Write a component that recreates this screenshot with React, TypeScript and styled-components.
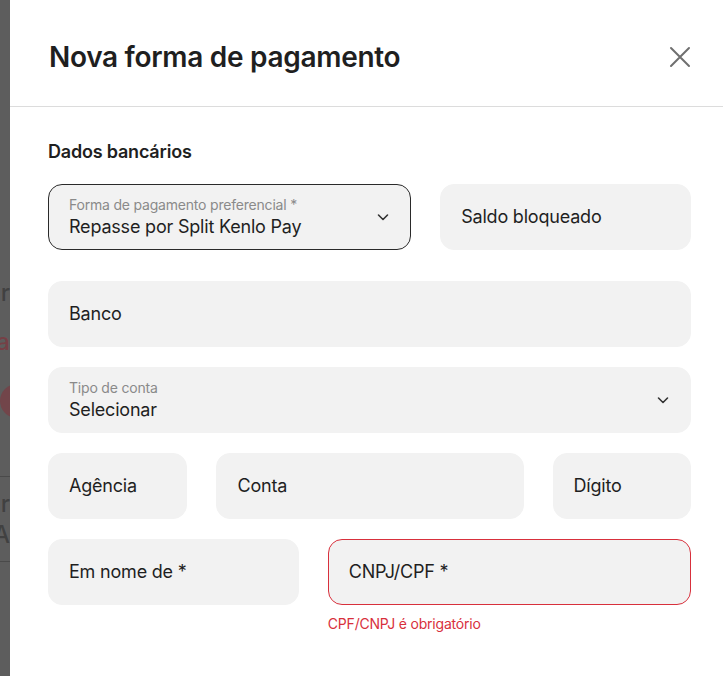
import styled, { createGlobalStyle } from 'styled-components';

const GlobalStyle = createGlobalStyle`
  html, body {
    margin: 0;
    padding: 0;
    background: #5d5d5d;
  }
  body {
    font-family: Inter, "Noto Sans", "Liberation Sans", sans-serif;
    color: #1f1f1f;
  }
`;

const Page = styled.div`
  display: flex;
  width: 723px;
  height: 676px;
  overflow: hidden;
`;

const Backdrop = styled.div`
  flex: 0 0 10px;
  overflow: hidden;
  display: flex;
  flex-direction: column;
  align-items: flex-end;
  padding-top: 278px;
  font-size: 24px;
`;

const GhostText = styled.div<{ $red?: boolean; $mt?: number }>`
  white-space: nowrap;
  font-weight: 500;
  margin-top: ${(p) => p.$mt ?? 0}px;
  color: ${(p) => (p.$red ? 'rgba(140, 40, 50, 0.55)' : 'rgba(30, 30, 30, 0.45)')};
`;

const GhostDot = styled.div`
  width: 34px;
  height: 34px;
  border-radius: 50%;
  margin-top: 28px;
  margin-right: -24px;
  background: rgba(140, 40, 50, 0.45);
`;

const GhostLine = styled.div<{ $mt: number }>`
  width: 40px;
  height: 1px;
  margin-top: ${(p) => p.$mt}px;
  background: rgba(30, 30, 30, 0.3);
`;

const Modal = styled.div`
  flex: 1;
  background: #fff;
  display: flex;
  flex-direction: column;
`;

const Header = styled.header`
  height: 98px;
  flex: 0 0 auto;
  display: flex;
  align-items: center;
  justify-content: space-between;
  padding: 8px 31px 0 39px;
  border-bottom: 1px solid #dcdcdc;
`;

const Title = styled.h1`
  margin: 0;
  font-size: 28px;
  font-weight: 600;
  letter-spacing: -0.3px;
  color: #1f1f1f;
`;

const CloseButton = styled.button`
  width: 24px;
  height: 24px;
  padding: 0;
  border: 0;
  background: transparent;
  cursor: pointer;
  display: flex;
  align-items: center;
  justify-content: center;
`;

const Body = styled.div`
  padding: 34px 32px 0 38px;
`;

const SectionTitle = styled.h2`
  margin: 0 0 22px;
  font-size: 18px;
  font-weight: 600;
  letter-spacing: -0.2px;
  color: #1f1f1f;
`;

const Row = styled.div<{ $cols: string; $mb?: number }>`
  display: grid;
  grid-template-columns: ${(p) => p.$cols};
  column-gap: 29px;
  margin-bottom: ${(p) => p.$mb ?? 20}px;
`;

const Field = styled.div<{ $variant?: 'focus' | 'error' }>`
  height: 66px;
  box-sizing: border-box;
  border-radius: 14px;
  background: #f2f2f2;
  border: 1px solid
    ${(p) =>
      p.$variant === 'focus' ? '#2a2a2a' : p.$variant === 'error' ? '#d8303c' : '#f2f2f2'};
  padding: 0 20px;
  display: flex;
  align-items: center;
  gap: 12px;
`;

const FieldText = styled.div`
  flex: 1;
  min-width: 0;
  display: flex;
  flex-direction: column;
  gap: 2px;
`;

const Label = styled.span`
  font-size: 14px;
  line-height: 17px;
  color: #8a8a8a;
  letter-spacing: -0.2px;
  white-space: nowrap;
`;

const Value = styled.span`
  font-size: 18px;
  line-height: 24px;
  color: #1f1f1f;
  letter-spacing: -0.2px;
  white-space: nowrap;
`;

const ErrorText = styled.div`
  margin-top: 10px;
  font-size: 14px;
  color: #d8303c;
  letter-spacing: -0.2px;
`;

const Chevron = () => (
  <svg width="14" height="14" viewBox="0 0 14 14" fill="none">
    <path d="M2.5 5l4.5 4.5L11.5 5" stroke="#333" strokeWidth="1.6" strokeLinecap="round" strokeLinejoin="round" />
  </svg>
);

type InputProps = {
  placeholder: string;
  variant?: 'focus' | 'error';
};

const Input = ({ placeholder, variant }: InputProps) => (
  <Field $variant={variant}>
    <FieldText>
      <Value>{placeholder}</Value>
    </FieldText>
  </Field>
);

type SelectProps = {
  label: string;
  value: string;
  variant?: 'focus' | 'error';
};

const Select = ({ label, value, variant }: SelectProps) => (
  <Field $variant={variant}>
    <FieldText>
      <Label>{label}</Label>
      <Value>{value}</Value>
    </FieldText>
    <Chevron />
  </Field>
);

export default function App() {
  return (
    <>
      <GlobalStyle />
      <Page>
        <Backdrop aria-hidden="true">
          <GhostText>Fornecer</GhostText>
          <GhostText $red $mt={20}>Cadastra</GhostText>
          <GhostDot />
          <GhostLine $mt={58} />
          <GhostText $mt={12}>Salvar</GhostText>
          <GhostText $mt={2}>DATA</GhostText>
          <GhostLine $mt={12} />
        </Backdrop>
        <Modal>
          <Header>
            <Title>Nova forma de pagamento</Title>
            <CloseButton aria-label="Fechar">
              <svg width="22" height="22" viewBox="0 0 22 22" fill="none">
                <path d="M2 2l18 18M20 2L2 20" stroke="#6f6f6f" strokeWidth="2" strokeLinecap="round" />
              </svg>
            </CloseButton>
          </Header>
          <Body>
            <SectionTitle>Dados bancários</SectionTitle>
            <Row $cols="362fr 250fr" $mb={31}>
              <Select label="Forma de pagamento preferencial *" value="Repasse por Split Kenlo Pay" variant="focus" />
              <Input placeholder="Saldo bloqueado" />
            </Row>
            <Row $cols="1fr">
              <Input placeholder="Banco" />
            </Row>
            <Row $cols="1fr">
              <Select label="Tipo de conta" value="Selecionar" />
            </Row>
            <Row $cols="139fr 306fr 138fr">
              <Input placeholder="Agência" />
              <Input placeholder="Conta" />
              <Input placeholder="Dígito" />
            </Row>
            <Row $cols="250fr 362fr">
              <Input placeholder="Em nome de *" />
              <div>
                <Input placeholder="CNPJ/CPF *" variant="error" />
                <ErrorText>CPF/CNPJ é obrigatório</ErrorText>
              </div>
            </Row>
          </Body>
        </Modal>
      </Page>
    </>
  );
}
